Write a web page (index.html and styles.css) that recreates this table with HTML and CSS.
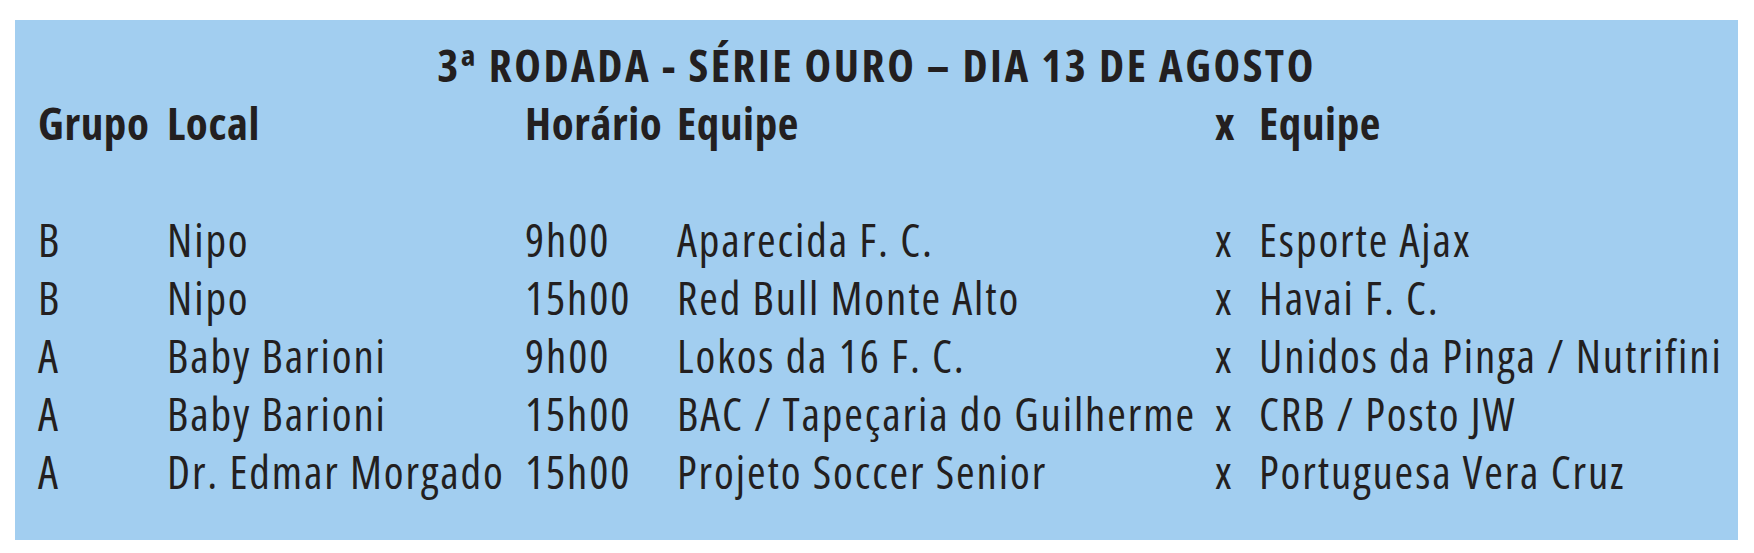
FILE: index.html
```html
<!DOCTYPE html>
<html lang="pt">
<head>
<meta charset="utf-8">
<title>3ª Rodada - Série Ouro</title>
<link rel="stylesheet" href="styles.css">
</head>
<body>
<section class="panel">
  <h1 class="title">3ª RODADA - SÉRIE OURO – DIA 13 DE AGOSTO</h1>
  <div class="grid">
    <div class="th">Grupo</div>
    <div class="th">Local</div>
    <div class="th">Horário</div>
    <div class="th">Equipe</div>
    <div class="th">x</div>
    <div class="th">Equipe</div>

    <div>B</div><div>Nipo</div><div>9h00</div><div>Aparecida F. C.</div><div>x</div><div>Esporte Ajax</div>
    <div>B</div><div>Nipo</div><div>15h00</div><div>Red Bull Monte Alto</div><div>x</div><div>Havai F. C.</div>
    <div>A</div><div>Baby Barioni</div><div>9h00</div><div>Lokos da 16 F. C.</div><div>x</div><div>Unidos da Pinga / Nutrifini</div>
    <div>A</div><div>Baby Barioni</div><div>15h00</div><div>BAC / Tapeçaria do Guilherme</div><div>x</div><div>CRB / Posto JW</div>
    <div>A</div><div>Dr. Edmar Morgado</div><div>15h00</div><div>Projeto Soccer Senior</div><div>x</div><div>Portuguesa Vera Cruz</div>
  </div>
</section>
</body>
</html>
```
FILE: styles.css
```css
html, body {
  margin: 0;
  padding: 0;
  background: #ffffff;
}
body {
  padding: 20px 16px 13px 15px;
  font-family: "Open Sans", "Noto Sans", sans-serif;
  color: #231f20;
}
.panel {
  background: #a2cef0;
  height: 520px;
  box-sizing: border-box;
  padding: 15.5px 0 0 23px;
}
.title {
  margin: 0 0 0 -23px;
  text-align: center;
  font-size: 45px;
  line-height: 58px;
  font-weight: 700;
  font-stretch: 75%;
  letter-spacing: 2.5px;
}
.grid {
  display: grid;
  grid-template-columns: 129px 358px 152px 538px 44px 1fr;
  font-size: 45px;
  line-height: 58px;
  font-stretch: 75%;
  letter-spacing: 1.9px;
  white-space: nowrap;
}
.th {
  font-weight: 700;
  font-stretch: 75%;
  letter-spacing: 0.6px;
  padding-bottom: 59px;
}
```
